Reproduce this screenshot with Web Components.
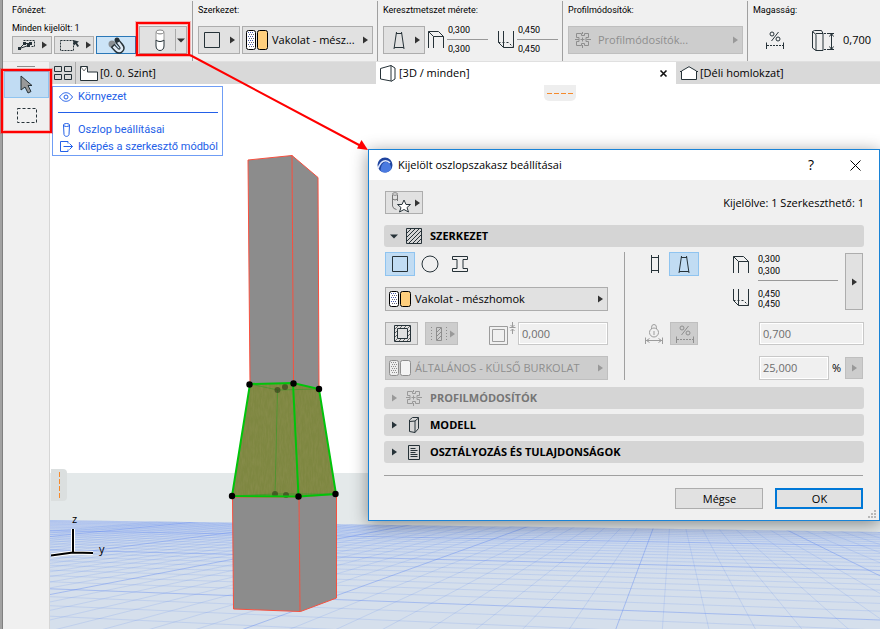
<!DOCTYPE html>
<html lang="hu">
<head>
<meta charset="utf-8">
<title>Kijelölt oszlopszakasz beállításai</title>
<style>
  html, body { height: 100%; margin: 0; }
  body {
    overflow: hidden;
    background: #f0f0f0;
    color: #000;
    font: 11px/16px "Open Sans", "Noto Sans", sans-serif;
    --small: 9px/12px Roboto, "Open Sans", sans-serif;
    --ink: #263238;
    --line: #adadad;
    --pick: #c1dcf3;
    --pick-line: #8fc4f0;
  }
</style>
</head>
<body>
<cad-app></cad-app>

<script>
/* Line icons, each drawn on its own pixel grid. */
const ICONS = {
  right: [5, 8, '<path d="M0 0.5L5 4L0 7.5z" fill="currentColor" stroke="none"/>'],
  down: [8, 5, '<path d="M0 0.5H8L4 4.5z" fill="currentColor" stroke="none"/>'],
  square: [16, 16, '<path d="M.5.5h15v15H.5z"/>'],
  circle: [18, 18, '<circle cx="9" cy="9" r="8"/>'],
  ibeam: [16, 18, '<path d="M.5 1.500h15v3h-4.500v9h4.500v3H.5v-3h4.500v-9H.5z"/>'],
  column: [10, 22, '<ellipse cx="5" cy="3" rx="4" ry="2" fill="#fff" stroke="#888"/><path d="M1 3.500v7.500c2 2 6 2 8 0V3.500c-2 2-6 2-8 0z" fill="#fff" stroke="#999"/><path d="M1 11c2 2 6 2 8 0v6c0 3-2 4.500-4 4.500S1 20 1 17z" fill="#fff"/>'],
  layers: [22, 20, '<rect x=".5" y=".5" width="9" height="19" rx="2" fill="#fff" stroke="#000"/><path d="M2.500 2v16M4.500 2v16M6.500 2v16" stroke="#4a5cab" stroke-dasharray="1 3"/><path d="M3.500 4v14M5.500 4v14M7.500 4v14" stroke="#667" stroke-dasharray="1 3"/><rect x="11.500" y=".5" width="10" height="19" rx="2" fill="#ffcf7d" stroke="#000"/>'],
  layersOff: [22, 16, '<rect x=".5" y=".5" width="9" height="15" rx="2" fill="#eee"/><path d="M2.500 2v12M4.500 2v12M6.500 2v12" stroke-dasharray="1 3"/><path d="M3.500 4v10M5.500 4v10M7.500 4v10" stroke-dasharray="1 3"/><rect x="11.500" y=".5" width="10" height="15" rx="2" fill="#f3f3f3"/>'],
  layersRow: [22, 16, '<rect x=".5" y=".5" width="9" height="15" rx="2" fill="#fff" stroke="#000"/><path d="M2.500 2v12M4.500 2v12M6.500 2v12" stroke="#4a5cab" stroke-dasharray="1 3"/><path d="M3.500 4v10M5.500 4v10M7.500 4v10" stroke="#667" stroke-dasharray="1 3"/><rect x="11.500" y=".5" width="10" height="15" rx="2" fill="#ffcf7d" stroke="#000"/>'],
  taper: [12, 17, '<path d="M3 1.500h6M1.200 15.500h9.600M3.500 0L1 17M8.500 0L11 17"/>'],
  prism: [10, 18, '<path d="M1.500 0v18M8.500 0v18M1.500 2.500h7M1.500 15.500h7"/>'],
  topSize: [16, 17, '<path d="M.5 17V.5h10l5 5V17M.5.5l5 5h10M5.500 5.500V17"/>'],
  bottomSize: [16, 17, '<path d="M.5 0v11.500l5 5h10V0M5.500 0v16.500"/><path d="M.5 11.500h10l5 5" stroke-dasharray="2 2"/>'],
  profile: [16, 16, '<path d="M1.500 1.500h5v2M9.500 3.500v-2h4v4h-2.500v4h2.500v4h-4v-2M6.500 11.500v2h-5v-4H4v-4H1.500v-4M6.500 3.500h3M6.500 11.500h3"/><path d="M0 7.500h4M11.500 7.500H16M7.500 0v2M7.500 13v3M5.500 7.500h4M7.500 5.500v4"/>'],
  percent: [18, 18, '<path d="M12.500 1L5.500 10"/><circle cx="6" cy="3" r="2"/><circle cx="12" cy="8" r="2"/><path d="M.5 11.500V18M17.500 11.500V18"/><path d="M1 14.500h17" stroke-dasharray="2 1"/>'],
  lock: [18, 20, '<circle cx="9" cy="8.500" r="4.500"/><path d="M6.500 5V3.500a2.500 3 0 0 1 5 0V5M9 7v4M.5 13.500V20M17.500 13.500V20M1 16.500h16M4.500 14.500l-3 2 3 2M13.500 14.500l3 2-3 2"/>'],
  height: [23, 21, '<path d="M.5 18V1.500L2.500.5h7l1.500 3v17H4L.5 18M.5 1.500l3.500 3v16M4 3.500h7"/><path d="M12 3.500h6M12 19.500h6" stroke-dasharray="2 1"/><path d="M19.500 4v15M17.500 6.500l2-3 2 3M17.500 16.500l2 3 2-3M17 3.500h5M17 19.500h5"/>'],
  pickEdit: [17, 12, '<path d="M5.500 1.500h11v6h-4" stroke-dasharray="2 1"/><path d="M1.500 9.500L6.500 4.500h6M1.500 9.500L10.500 6.500M10.500 6.500l2-2"/><path d="M0 8h3v3H0zM9 5h3v3H9zM5 3h3v3H5zM11 3h3v3h-3z" fill="#263238" stroke="none"/>'],
  pickArea: [20, 12, '<path d="M.5 1.500h13v10H.5z" stroke-dasharray="2 1"/><path d="M13 1l6 1.500-2 1.500 2 3-1.500 1-2-3-1.500 1.500z" fill="#263238" stroke="none"/>'],
  magnet: [17, 17, '<circle cx="4" cy="7" r="3.500" fill="#8b9094" stroke="none"/><path d="M4.500 8.500l4 4.500c3.500 3 7.500-1 4.500-4.500L9 4" stroke="#263238" stroke-width="5"/><path d="M5.500 9.500l3.500 3.500c3 2.600 6.500-1 4-4L10 5" stroke="#dfeaf5" stroke-width="2.500"/><circle cx="9" cy="3" r="2.500" fill="#263238" stroke="none"/>'],
  arrow: [13, 19, '<path d="M1 1v14l4-3 3 6 3-1.500-3-6h4z" fill="#999"/>'],
  marquee: [20, 15, '<path d="M.5.5h19v14H.5z" stroke-dasharray="3 2"/>'],
  quad: [18, 14, '<path d="M.5.5h7v5h-7zM10.500.5h7v5h-7zM.5 8.500h7v5h-7zM10.500 8.500h7v5h-7z"/>'],
  plan: [18, 15, '<path d="M.5.5h7v5.500h10v8.500H.5z" fill="#fff"/><path d="M1 1l3 4 3-4" stroke="#777"/>'],
  view3d: [17, 17, '<path d="M.5 3.500l10.500-3v15.500l-10.500-2zM11 .5l4 2.500v11l-4 2.500" fill="#fff"/>'],
  elevation: [18, 14, '<path d="M1.500 13.500V5L9 .7 16.500 5v8.500z" fill="#fff"/><path d="M0 5.500h2M16 5.500h2"/>'],
  eye: [14, 10, '<path d="M.5 5C3 1.500 5 .7 7 .7S11 1.500 13.500 5C11 8.500 9 9.300 7 9.300S3 8.500.5 5z"/><circle cx="7" cy="5" r="2"/>'],
  pole: [7, 14, '<ellipse cx="3.500" cy="2" rx="3" ry="1.500"/><path d="M.5 2l.5 9.500c.5 2.500 4.500 2.500 5 0l.5-9.500"/>'],
  exit: [13, 11, '<path d="M8 2.500v-2H.5v10H8v-2M3.500 5.500h9M9.500 2.500l3 3-3 3"/>'],
  favorite: [20, 21, '<path d="M1.500 3v11q.5 3 4 3.500M6.500 3v6M1.500 7q2.500 2 5 0" stroke="#777"/><ellipse cx="4" cy="2" rx="2.500" ry="1.300" stroke="#888"/><path d="M13 8l2 4.500h4.500l-3.500 3 1.500 4.500-4.500-2.500-4.500 2.500 1.500-4.500-3.500-3h4.500z" fill="#fff"/>'],
  hatch: [16, 16, '<path d="M.5.5h15v15H.5zM1 5l4-4M1 9l8-8M1 13l12-12M3 15L15 3M7 15l8-8M11 15l4-4"/>'],
  core: [17, 17, '<path d="M.5.5h16v16H.5zM3.500 3.500h10v10h-10z"/><path d="M1 4l3-3M6 3l2-2M10 3l2-2M14 3l2-2M1 8l2-2M1 12l2-2M1 16l2-2M5 16l2-2M9 16l2-2M13 16l3-3M14 7l2-2M14 11l2-2" stroke="#666"/>'],
  skin: [16, 14, '<path d="M.5 0v14M15.500 0v14" stroke-dasharray="1 2"/><path d="M5.500.5h5v13h-5zM6 5l4-4M6 9l4-4M6 13l4-4"/>'],
  offset: [26, 24, '<path d="M.5 4.500h18v18H.5zM3.500 7.500h12v12h-12zM23.500 0v5M21.500 3l2 2 2-2M20.500 5.500h6M23.500 12V7M21.500 9l2-2 2 2"/>'],
  box: [10, 16, '<path d="M.5 14.500V3l3-2.500h6v11l-3.500 4zM.5 4.500l5.500-.5 3.500-3M6 4v11.500"/>'],
  list: [12, 15, '<path d="M.5.5h11v14H.5zM2.500 3.500h5M2.500 5.500h7M2.500 7.500h5M2.500 9.500h7M2.500 11.500h7"/>'],
  cross: [11, 11, '<path d="M.5.5l10 10M10.500.5l-10 10" stroke="#000"/>'],
  tabClose: [7, 7, '<path d="M.5.5l6 6M6.500.5l-6 6" stroke="#111" stroke-width="1.600"/>'],
  grip: [8, 8, '<path d="M6 0h2v2H6zM3 3h2v2H3zM6 3h2v2H6zM0 6h2v2H0zM3 6h2v2H3zM6 6h2v2H6z" fill="#b8b8b8" stroke="none"/>'],
  logo: [16, 16, '<circle cx="8" cy="8" r="7.500" fill="#1f449f" stroke="none"/><path d="M3.500 14C4 7.500 6.500 5 9 5s5 2.500 5.500 7A7.500 7.500 0 0 1 3.500 14z" fill="#4a7ae0" stroke="none"/><path d="M1 11.500C3 6 5.500 3.700 8.500 3.700c2 0 3.500 1 4.500 2.300" stroke="#dfe8ff" stroke-width="1.600"/>']
};

/* Base class: each element supplies static html, cloned into an open root. */
class Part extends HTMLElement {
  constructor() {
    super();
    const t = document.createElement('template');
    t.innerHTML = this.constructor.html;
    this.attachShadow({ mode: 'open' }).append(t.content.cloneNode(true));
  }
  $(sel) { return this.shadowRoot.querySelector(sel); }
}
const define = (name, cls) => customElements.define(name, cls);

define('cad-icon', class extends Part {
  static html = `<style>:host{display:inline-flex;flex:none} svg{display:block;overflow:visible}</style><span></span>`;
  static observedAttributes = ['name'];
  attributeChangedCallback(_, old, name) {
    const [w, h, body] = ICONS[name];
    this.$('span').innerHTML = `<svg aria-hidden="true" width="${w}" height="${h}" viewBox="0 0 ${w} ${h}" fill="none" stroke="currentColor">${body}</svg>`;
  }
});

/* Push button; "menu" adds a fly-out arrow, "flat" and "picked" change its face. */
define('cad-button', class extends Part {
  static html = `<style>
    :host{display:flex;color:var(--ink)}
    button{flex:1;display:flex;align-items:center;justify-content:center;min-width:0;box-sizing:border-box;margin:0;padding:0 4px 0 5px;
      font:inherit;color:inherit;background:#e1e1e1;border:1px solid var(--line);border-radius:0}
    :host([menu]) button{justify-content:space-between}
    :host([flat]) button{background:none;border-color:transparent;padding:0 4px}
    :host([picked]) button{background:var(--pick);border-color:var(--pick-line)}
    :host([off]){color:#8e8e8e} :host([off]) button{background:#cdcdcd;border-color:#bfbfbf}
    :host([primary]) button{border:2px solid #0078d7}
    :host([wide]) button{padding-left:3px}
    :host([slim]) button{padding:0 2px 0 5px}
    .face{display:flex;align-items:center;gap:4px;flex:0 1 auto;min-width:0;white-space:nowrap}
    :host([bare]) .face{display:none} :host([bare]) button{justify-content:center;padding:0}
    .tip{display:none} :host([menu]) .tip,:host([drop]) .tip{display:flex;color:#333}
    :host([off]) .tip{color:#999}
    :host([drop]) button{padding:0 1px 0 4px}
    :host([drop]) .tip{border-left:1px solid #aaa;align-self:stretch;margin:2px 0;padding-left:1px;align-items:center}
    :host([drop]) .face{margin:auto}
  </style><button type="button"><span class="face"><slot></slot></span><span class="tip"></span></button>`;
  connectedCallback() {
    const b = this.$('button');
    if (this.hasAttribute('off')) b.disabled = true;
    if (this.hasAttribute('picked')) b.setAttribute('aria-pressed', 'true');
    if (this.hasAttribute('name')) b.setAttribute('aria-label', this.getAttribute('name'));
    const tip = this.$('.tip');
    if (this.hasAttribute('menu')) tip.innerHTML = '<cad-icon name="right"></cad-icon>';
    if (this.hasAttribute('drop')) tip.innerHTML = '<cad-icon name="down"></cad-icon>';
  }
});

define('cad-field', class extends Part {
  static html = `<style>
    :host{display:flex}
    input{width:100%;min-width:0;box-sizing:border-box;margin:0;padding:0 3px;font:inherit;color:#6d6d6d;background:#f0f0f0;
      border:1px solid #c8c8c8;box-shadow:inset 0 0 0 1px #fff;border-radius:0}
  </style><input type="text" disabled>`;
  connectedCallback() {
    this.$('input').value = this.getAttribute('value');
    this.$('input').setAttribute('aria-label', this.getAttribute('label'));
  }
});

/* One labelled cell of the info bar. */
define('cad-info', class extends Part {
  static html = `<style>
    :host{display:flex;flex-direction:column;justify-content:space-between;box-sizing:border-box;height:60px;
      padding:3px 4px 7px 5px;border-right:1px solid #a0a0a0;min-width:0}
    :host(:last-of-type){border-right:0}
    h2{margin:0;font:var(--small);color:#000;white-space:nowrap}
    .row{display:flex;align-items:flex-end;min-height:28px}
  </style><h2></h2><div class="row"><slot></slot></div>`;
  connectedCallback() { this.$('h2').textContent = this.getAttribute('label'); }
});

/* Two sizes parted by a rule. */
define('cad-pair', class extends Part {
  static html = `<style>
    :host{display:block;width:41px;font:var(--small);line-height:10px}
    div{padding:4px 1px 0} div:first-of-type{border-bottom:1px solid #999;padding:0 1px 4px}
  </style><div></div><div></div>`;
  connectedCallback() {
    const [a, b] = this.shadowRoot.querySelectorAll('div');
    a.textContent = this.getAttribute('a'); b.textContent = this.getAttribute('b');
  }
});

define('cad-infobar', class extends Part {
  static html = `<style>
    :host{display:grid;grid-template-columns:190px repeat(3,185px) minmax(0,1fr);height:62px;box-sizing:border-box;
      padding-top:1px;border-bottom:1px solid #e0e0e0;color:#000}
    cad-info:first-of-type{padding-left:9px;padding-right:2px}
    .sel{display:grid;grid-template-columns:40px 40px 40px;gap:2px;font:var(--small)}
    .sel span{grid-column:1/-1;white-space:nowrap}
    .sel cad-button{height:18px}
    .big{height:28px}
    .gap{flex:1}
    .ctr{align-self:center;color:var(--ink)}
    .size{margin:0 3px}
    .val{align-self:center}
  </style>
  <cad-info label="Főnézet:">
    <div class="sel"><span>Minden kijelölt: 1</span>
      <cad-button menu name="Elemek"><cad-icon name="pickEdit"></cad-icon></cad-button>
      <cad-button menu slim name="Terület"><cad-icon name="pickArea"></cad-icon></cad-button>
      <cad-button picked name="Mágnes" style="--pick:#cce4f7;--pick-line:#2a78b8"><cad-icon name="magnet"></cad-icon></cad-button>
    </div>
    <cad-button class="big" drop name="Oszlop" style="width:48px;margin-left:3px"><cad-icon name="column"></cad-icon></cad-button>
  </cad-info>
  <cad-info label="Szerkezet:">
    <cad-button class="big" menu name="Négyszög" style="width:42px"><cad-icon name="square"></cad-icon></cad-button>
    <cad-button class="big" menu wide style="flex:1;margin-left:2px;color:#000"><cad-icon name="layers"></cad-icon>Vakolat - mész...</cad-button>
  </cad-info>
  <cad-info label="Keresztmetszet mérete:">
    <cad-button class="big" menu name="Ferde" style="width:42px"><cad-icon name="taper" style="margin-left:4px"></cad-icon></cad-button>
    <cad-icon class="ctr size" name="topSize"></cad-icon><cad-pair a="0,300" b="0,300"></cad-pair>
    <span class="gap"></span>
    <cad-icon class="ctr size" name="bottomSize"></cad-icon><cad-pair a="0,450" b="0,450"></cad-pair>
  </cad-info>
  <cad-info label="Profilmódosítók:">
    <cad-button class="big" menu wide off style="flex:1"><cad-icon name="profile" style="margin:0 3px"></cad-icon>Profilmódosítók...</cad-button>
  </cad-info>
  <cad-info label="Magasság:">
    <cad-icon class="ctr" name="percent" style="margin:0 28px 0 13px"></cad-icon>
    <cad-icon class="ctr" name="height"></cad-icon>
    <span class="val" style="margin:0 8px">0,700</span>
  </cad-info>`;
});

define('cad-palette', class extends Part {
  static html = `<style>
    :host{display:flex;flex-direction:column;align-items:stretch;width:47px;flex:none;box-sizing:border-box;border-right:1px solid #d6d6d6;padding-top:4px}
    i{height:1px;width:18px;background:#8c8c8c;align-self:center;margin-bottom:4px}
    cad-button{height:27px;margin:0 0 0 1px} cad-button + cad-button{margin-top:4px}
  </style><i></i>
  <cad-button flat picked name="Nyíl"><cad-icon name="arrow"></cad-icon></cad-button>
  <cad-button flat name="Kijelölő keret"><cad-icon name="marquee"></cad-icon></cad-button>`;
});

define('cad-tab', class extends Part {
  static html = `<style>
    :host{display:flex;flex:0 0 300px;min-width:0;align-items:center;background:#d9d9d9;padding:0 9px 0 4px;box-sizing:border-box}
    :host([active]){background:#fff} :host(:last-of-type){flex:1 1 0}
    button{font:inherit;border:0;background:none;padding:0;margin:0;display:flex;align-items:center;color:#000}
    .t{flex:1;gap:2px;min-width:0;white-space:nowrap;text-align:left}
    cad-icon{color:var(--ink)}
    .x{display:none} :host([active]) .x{display:flex}
  </style><button class="t" role="tab" type="button"><cad-icon class="i"></cad-icon><slot></slot></button><button class="x" type="button" aria-label="Bezárás"><cad-icon name="tabClose"></cad-icon></button>`;
  connectedCallback() { this.$('.i').setAttribute('name', this.getAttribute('icon')); }
});

define('cad-menu', class extends Part {
  static html = `<style>
    :host{display:block;box-sizing:border-box;background:#fff;border:1px solid #6f9df5;padding:1px 4px 0 5px;font:11px/17px Roboto,"Open Sans",sans-serif}
    button{display:grid;grid-template-columns:16px 1fr;column-gap:4px;align-items:center;justify-items:start;width:100%;height:17px;padding:0;border:0;background:none;font:inherit;color:#2360e8;white-space:nowrap}
    button cad-icon{justify-self:center}
    hr{border:0;height:1px;background:#2360e8;margin:7px 0 8px}
  </style>
  <button type="button"><cad-icon name="eye"></cad-icon>Környezet</button><hr>
  <button type="button"><cad-icon name="pole"></cad-icon>Oszlop beállításai</button>
  <button type="button"><cad-icon name="exit"></cad-icon>Kilépés a szerkesztő módból</button>`;
});

/* 3D view: floor grid in perspective, the column and its edited segment. */
define('cad-scene', class extends Part {
  static html = `<style>:host{display:block;overflow:hidden;background:#fff} svg{display:block;width:100%;height:100%}</style>
  <svg viewBox="50 84 830 545" preserveAspectRatio="xMinYMin slice" font-family="Open Sans, sans-serif" font-size="11" role="img" aria-label="3D nézet">
    <defs>
      <clipPath id="floor"><path d="M50 520L880 532V629H50z"/></clipPath>
      <linearGradient id="haze" x1="0" y1="518" x2="0" y2="629" gradientUnits="userSpaceOnUse"><stop offset="0" stop-color="#c0cfef"/><stop offset=".2" stop-color="#cbd8ed"/><stop offset=".55" stop-color="#d5dfec"/></linearGradient>
      <filter id="grain" x="0" y="0" width="1" height="1"><feTurbulence type="fractalNoise" baseFrequency=".6 .12" numOctaves="2" seed="4"/><feColorMatrix values="0 0 0 0 .3  0 0 0 0 .3  0 0 0 0 .1  1.2 0 0 0 -.4"/><feComposite in2="SourceGraphic" operator="in"/></filter>
    </defs>
    <path d="M50 473H880V629H50z" fill="#e4e9ea"/>
    <path d="M50 520L880 532V629H50z" fill="url(#haze)"/>
    <g id="grid" clip-path="url(#floor)" stroke="#6088f0" fill="none"></g>
    <path d="M544 85h32v11a5 5 0 0 1-5 5h-22a5 5 0 0 1-5-5z" fill="#eee"/>
    <path d="M547 93.500h26" stroke="#f58a2c" stroke-dasharray="5 2"/>
    <path d="M51 469h12a4 4 0 0 1 4 4v24a4 4 0 0 1-4 4H51z" fill="#dbdfdf"/>
    <path d="M59.500 472v26" stroke="#f58a2c" stroke-dasharray="5 2"/>
    <path d="M73 529v23.500l20 .5M73 552.500L51 555.500" fill="none" stroke="#fff" stroke-width="4"/>
    <path d="M73 529v23.500l20 .5M73 552.500L51 555.500" fill="none" stroke="#000" stroke-width="2"/>
    <text x="72" y="523">z</text><text x="99" y="553">y</text>
    <g fill="#8c8c8c" stroke="#f8503f" stroke-linejoin="round">
      <path d="M248 160L292 155.500L318 177.500L319 389L293.500 384H250z"/><path d="M292 155.500L293.500 384"/>
      <path d="M232.500 497L233.500 609L300.500 611.500L336.500 598V494L299 497z"/><path d="M299 497L300 611.500"/>
    </g>
    <path d="M250 384L293 383L319 389L336 494L298.500 496.500L232 496z" fill="#7e8741"/>
    <path d="M250 384L293 383L319 389L336 494L298.500 496.500L232 496z" fill="#000" filter="url(#grain)" opacity=".6"/>
    <path d="M250 384L277.500 390L319 389M277.500 390L275 494L232 496M275 494L336 494" fill="none" stroke="#2a9c20" opacity=".55"/>
    <g fill="#33401a" opacity=".65"><circle cx="277.500" cy="390" r="3"/><circle cx="285" cy="387" r="3"/><circle cx="275" cy="494" r="3"/><circle cx="286" cy="495" r="3"/></g>
    <path d="M250 384L293 383L319 389L336 494L298.500 496.500L232 496zM293 383L298.500 496.500" fill="none" stroke="#00c40b" stroke-width="2"/>
    <g><circle cx="249.500" cy="384.500" r="3.200"/><circle cx="293.500" cy="383.500" r="3.200"/><circle cx="319" cy="389" r="3.200"/><circle cx="232" cy="496" r="3.200"/><circle cx="298.500" cy="496.500" r="3.200"/><circle cx="335.500" cy="494" r="3.200"/></g>
  </svg>`;
  connectedCallback() {
    const horizon = 474, bottom = 640;
    let fine = '', bold = '';
    /* Lines that run away from the viewer. */
    for (let n = -36; n <= 30; n++) {
      const k = -0.0707 + 0.3 * n, x = y => (673.3 + k * (y - horizon)).toFixed(1);
      const d = `M${x(515)} 515L${x(bottom)} ${bottom}`;
      (n + 65) % 8 === 0 ? bold += d : fine += d;
    }
    /* Cross lines, evenly spaced in 1/distance. */
    for (let n = -3; n <= 25; n++) {
      const slope = 1 / (0.00768 + 0.000494 * n) / 3460, y = x => (horizon + slope * (x + 3000)).toFixed(1);
      const d = `M50 ${y(50)}L880 ${y(880)}`;
      n % 8 === 0 ? bold += d : fine += d;
    }
    this.$('#grid').innerHTML = `<path d="${fine}" opacity=".18"/><path d="${bold}" opacity=".42"/>`;
  }
});

/* Collapsible section heading. */
define('cad-section', class extends Part {
  static html = `<style>
    :host{display:block}
    h3{margin:0;font:inherit}
    button{display:grid;grid-template-columns:8px 16px 1fr;column-gap:8px;align-items:center;justify-items:center;width:100%;height:22px;padding:0 6px;border:0;border-radius:3px;
      background:#d5d5d5;font:bold 11px/16px "Open Sans","Noto Sans",sans-serif;color:#000;text-align:left}
    cad-icon{color:var(--ink)} b{justify-self:start;font-weight:inherit}
    :host([off]) button{color:#757575} :host([off]) cad-icon{color:#999}
  </style><h3><button type="button"><cad-icon class="a"></cad-icon><cad-icon class="i"></cad-icon><b><slot></slot></b></button></h3>`;
  connectedCallback() {
    const open = this.hasAttribute('open');
    this.$('.a').setAttribute('name', open ? 'down' : 'right');
    this.$('.i').setAttribute('name', this.getAttribute('icon'));
    this.$('button').disabled = this.hasAttribute('off');
    this.$('button').setAttribute('aria-expanded', open);
  }
});

define('cad-dialog', class extends Part {
  static html = `<style>
    :host{display:block;box-sizing:border-box;background:#f0f0f0;border:1px solid #1883d7;box-shadow:0 3px 16px rgba(0,0,0,.42)}
    header{display:flex;align-items:center;height:30px;background:#fff;padding:0 18px 0 8px;gap:5px}
    header h1{flex:1;margin:0;font:inherit}
    header button{border:0;background:none;padding:0;font:14px/20px "Open Sans",sans-serif;color:#000;display:flex}
    header button:first-of-type{margin-right:31px}
    .body{padding:11px 15px;position:relative}
    .top{display:flex;justify-content:space-between;align-items:center;margin:0 0 11px 1px}
    .top cad-button{width:38px;height:23px}
    .panel{display:grid;grid-template-columns:223px 17px 1fr;padding:5px 0 7px 1px}
    .panel > i{border-right:1px solid #a0a0a0}
    .l,.r{display:grid;row-gap:11px;align-items:stretch}
    .l{grid-template-rows:24px 24px 23px 24px}
    .r{grid-template-columns:1fr 106px;grid-template-rows:59px 23px 24px;margin-left:19px}
    .f{display:flex;align-items:center;min-width:0}
    .f > cad-button{align-self:stretch}
    .w30{width:30px} .w33{width:33px}
    .dim{color:#9c9c9c}
    .top2{align-items:flex-start}
    .top2 > cad-button{align-self:flex-start;height:24px}
    .icons{display:flex;flex-direction:column;gap:16px;margin:4px 9px 0 auto;color:var(--ink)}
    dl{margin:0;padding-top:1px;width:80px;font:var(--small)}
    dd{margin:0} .lo{line-height:10px;border-top:1px solid #999;margin-top:3px;padding-top:8px}
    .narrow{width:18px;flex:none}
    cad-section + cad-section{margin-top:5px}
    hr{border:0;height:1px;background:#a0a0a0;margin:12px 1px 12px 0}
    footer{display:flex;justify-content:flex-end;gap:12px;margin-right:1px}
    footer cad-button{width:88px;height:21px;color:#000}
    .grip{position:absolute;right:3px;bottom:2px}
  </style>
  <header><cad-icon name="logo"></cad-icon><h1>Kijelölt oszlopszakasz beállításai</h1>
    <button type="button" aria-label="Súgó">?</button><button type="button" aria-label="Bezárás"><cad-icon name="cross"></cad-icon></button></header>
  <div class="body">
    <div class="top"><cad-button menu slim name="Kedvencek"><cad-icon name="favorite"></cad-icon></cad-button><span>Kijelölve: 1 Szerkeszthető: 1</span></div>
    <cad-section open icon="hatch">SZERKEZET</cad-section>
    <div class="panel">
      <div class="l">
        <div class="f"><cad-button class="w30" flat picked name="Négyszög"><cad-icon name="square"></cad-icon></cad-button>
          <cad-button class="w30" flat name="Kör"><cad-icon name="circle"></cad-icon></cad-button>
          <cad-button class="w30" flat name="Profil"><cad-icon name="ibeam"></cad-icon></cad-button></div>
        <cad-button menu wide style="color:#000"><cad-icon name="layersRow"></cad-icon>Vakolat - mészhomok</cad-button>
        <div class="f"><cad-button class="w33" name="Mag"><cad-icon name="core"></cad-icon></cad-button>
          <cad-button class="w33" menu off slim name="Burkolat" style="margin-left:7px"><cad-icon name="skin"></cad-icon></cad-button>
          <cad-icon class="dim" name="offset" style="margin:0 3px 0 auto"></cad-icon>
          <cad-field value="0,000" label="Burkolat vastagsága" style="width:90px;align-self:stretch"></cad-field></div>
        <cad-button menu wide off><cad-icon name="layersOff"></cad-icon>ÁLTALÁNOS - KÜLSŐ BURKOLAT</cad-button>
      </div>
      <i></i>
      <div class="r">
        <div class="f top2"><cad-button flat name="Egyenes" style="width:22px"><cad-icon name="prism"></cad-icon></cad-button>
          <cad-button class="w30" flat picked name="Ferde" style="margin-left:3px"><cad-icon name="taper"></cad-icon></cad-button>
          <div class="icons"><cad-icon name="topSize"></cad-icon><cad-icon name="bottomSize"></cad-icon></div></div>
        <div class="f top2"><dl><dd>0,300</dd><dd>0,300</dd><dd class="lo">0,450<br>0,450</dd></dl>
          <cad-button class="narrow" menu bare name="Méretek" style="height:57px;margin:1px 0 0 7px"></cad-button></div>
        <div class="f"><cad-icon class="dim" name="lock" style="margin:0 7px 0 1px"></cad-icon><cad-button off name="Százalék" style="width:28px"><cad-icon name="percent"></cad-icon></cad-button></div>
        <div class="f" style="padding-left:1px"><cad-field value="0,700" label="Magasság" style="flex:1;align-self:stretch"></cad-field></div>
        <span></span>
        <div class="f" style="padding:0 1px"><cad-field value="25,000" label="Százalék" style="flex:1;align-self:stretch"></cad-field><span style="margin:0 4px 0 3px">%</span><cad-button class="narrow" menu off bare name="Alap" style="margin:1px 0"></cad-button></div>
      </div>
    </div>
    <cad-section off icon="profile">PROFILMÓDOSÍTÓK</cad-section>
    <cad-section icon="box">MODELL</cad-section>
    <cad-section icon="list">OSZTÁLYOZÁS ÉS TULAJDONSÁGOK</cad-section>
    <hr>
    <footer><cad-button>Mégse</cad-button><cad-button primary>OK</cad-button></footer>
    <cad-icon class="grip" name="grip"></cad-icon>
  </div>`;
});

/* Red call-outs drawn over the window. */
define('cad-callouts', class extends Part {
  static html = `<style>:host{display:block;pointer-events:none} svg{display:block;overflow:visible}</style>
  <svg width="1" height="1" fill="none" stroke="#f00" aria-hidden="true">
    <g stroke-opacity=".25" stroke-width="4"><path d="M137 23h52v32h-52zM2 70h49v62H2z"/></g>
    <g stroke-width="2"><path d="M137 23h52v32h-52zM2 70h49v62H2zM190 55L360 145.500"/></g>
    <path d="M368 150l-11-1.500 4.500-8.500z" fill="#f00" stroke="none"/>
  </svg>`;
});

define('cad-app', class extends Part {
  static html = `<style>
    :host{display:flex;flex-direction:column;position:relative;height:100vh;box-sizing:border-box;border-left:2px solid #a2a2a2;background:#f0f0f0}
    .frame{flex:1;display:flex;flex-direction:column;min-height:0;border-left:1px solid #808080}
    .work{flex:1;display:flex;min-height:0}
    .main{flex:1;display:flex;flex-direction:column;min-width:0}
    nav{display:flex;height:22px;background:#d9d9d9;overflow:hidden}
    .grid{display:flex;align-items:center;border:0;border-right:1px solid #aaa;background:none;padding:0 3px 0 4px;color:var(--ink)}
    .canvas{flex:1;position:relative;min-height:0}
    cad-scene{position:absolute;inset:0}
    cad-menu{position:absolute;left:2px;top:2px;width:171px}
    cad-dialog{position:absolute;left:366px;right:0;top:149px}
    cad-callouts{position:absolute;left:-2px;top:0}
  </style>
  <div class="frame">
    <cad-infobar></cad-infobar>
    <div class="work">
      <cad-palette></cad-palette>
      <div class="main">
        <nav><button class="grid" type="button" aria-label="Lapok"><cad-icon name="quad"></cad-icon></button>
          <cad-tab icon="plan">[0. 0. Szint]</cad-tab><cad-tab icon="view3d" active>[3D / minden]</cad-tab><cad-tab icon="elevation">[Déli homlokzat]</cad-tab></nav>
        <div class="canvas"><cad-scene></cad-scene><cad-menu></cad-menu></div>
      </div>
    </div>
  </div>
  <cad-dialog></cad-dialog>
  <cad-callouts></cad-callouts>`;
});
</script>
</body>
</html>
